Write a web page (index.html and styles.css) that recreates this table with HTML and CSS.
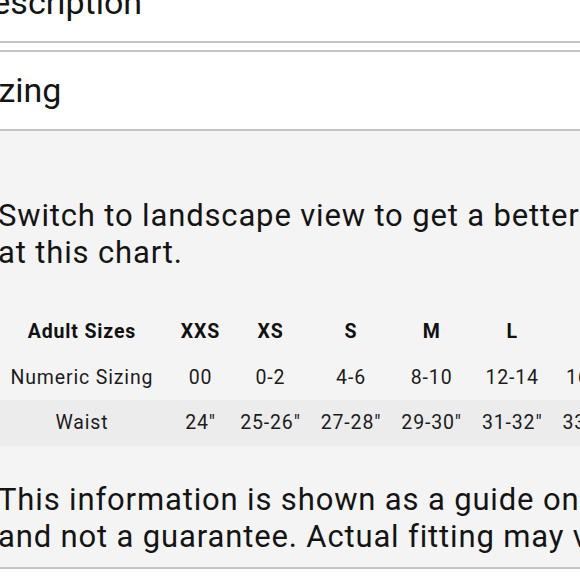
FILE: index.html
```html
<!DOCTYPE html>
<html lang="en">
<head>
<meta charset="utf-8">
<title>Sizing</title>
<link rel="stylesheet" href="styles.css">
</head>
<body>
<div class="page">
  <section class="acc">
    <h2 class="acc-title">Description</h2>
  </section>
  <section class="acc open">
    <h2 class="acc-title">Sizing</h2>
    <div class="acc-body">
      <p class="note">Switch to landscape view to get a better look at this chart.</p>
      <table class="chart">
        <thead>
          <tr>
            <th class="first">Adult Sizes</th>
            <th>XXS</th>
            <th>XS</th>
            <th>S</th>
            <th>M</th>
            <th>L</th>
            <th>XL</th>
            <th>XXL</th>
          </tr>
        </thead>
        <tbody>
          <tr>
            <td class="first">Numeric Sizing</td>
            <td>00</td>
            <td>0-2</td>
            <td>4-6</td>
            <td>8-10</td>
            <td>12-14</td>
            <td>16-18</td>
            <td>20-22</td>
          </tr>
          <tr class="shade">
            <td class="first">Waist</td>
            <td>24"</td>
            <td>25-26"</td>
            <td>27-28"</td>
            <td>29-30"</td>
            <td>31-32"</td>
            <td>33-34"</td>
            <td>35-36"</td>
          </tr>
        </tbody>
      </table>
      <p class="note">This information is shown as a guide only and not a guarantee. Actual fitting may vary.</p>
    </div>
  </section>
</div>
</body>
</html>
```

FILE: styles.css
```css
html, body {
  margin: 0;
  padding: 0;
  background: #ffffff;
  overflow: hidden;
}

body {
  width: 580px;
  height: 580px;
  font-family: Roboto, "Noto Sans", "Liberation Sans", sans-serif;
  color: #161616;
}

.page {
  margin-top: -38px;
  margin-left: -28px;
  width: 720px;
}

.acc {
  border-top: 2px solid #c4c4c4;
  margin-bottom: 7px;
}

.acc-title {
  margin: 0;
  padding: 18px 0 19px 0;
  font-size: 34px;
  line-height: 40px;
  font-weight: 400;
  text-indent: -2px;
  border-bottom: 2px solid #c4c4c4;
  color: #141414;
}

.acc-body {
  background: #f4f4f4;
  padding: 66px 0 12px 26px;
  border-bottom: 2px solid #c4c4c4;
}

.note {
  margin: 0;
  width: 658px;
  font-size: 31px;
  line-height: 37px;
  letter-spacing: 0.85px;
  color: #141414;
}

.chart {
  border-collapse: collapse;
  margin: 38px 0 35px -5px;
  font-size: 19.5px;
  letter-spacing: 0.85px;
  color: #1c1c1c;
}

.chart th,
.chart td {
  height: 45.5px;
  padding: 0 10px;
  text-align: center;
  white-space: nowrap;
}

.chart th {
  font-weight: 700;
  color: #111111;
}

.chart .first {
  padding: 0 17.5px;
}

.chart .shade {
  background: #ececec;
}
```
